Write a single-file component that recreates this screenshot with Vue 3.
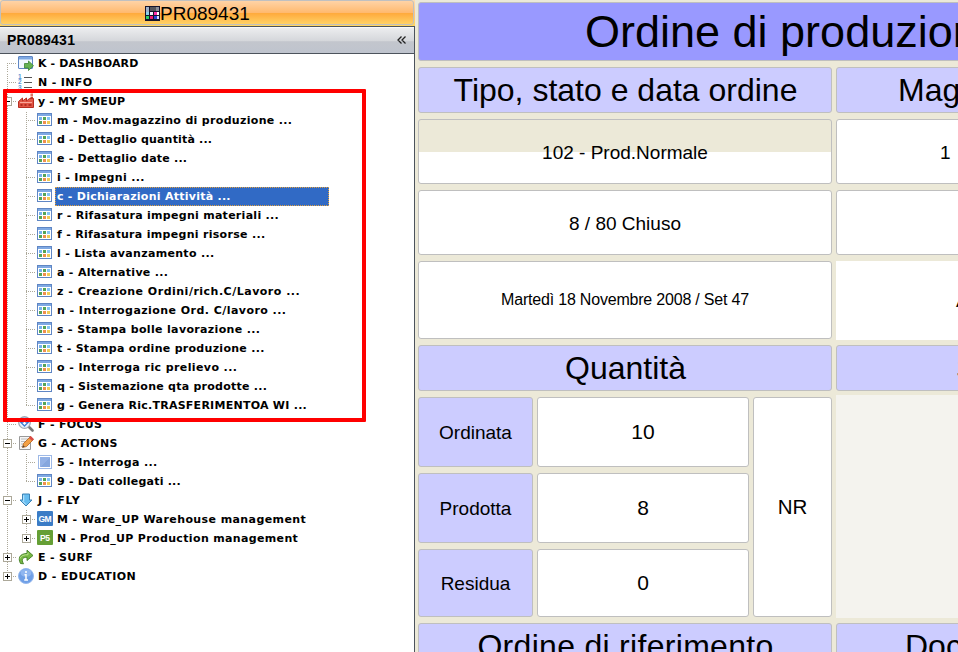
<script setup>
const rows = [
  { icon: 'dash', text: 'K - DASHBOARD', track: 0.1, first: true },
  { icon: 'list', text: 'N - INFO', track: 0.35 },
  { icon: 'factory', text: 'y - MY SMEUP', track: 0.15, box: '-' },
  { level: 1, icon: 'grid', text: 'm - Mov.magazzino di produzione ...', track: 0.32 },
  { level: 1, icon: 'grid', text: 'd - Dettaglio quantità ...', track: 0.18 },
  { level: 1, icon: 'grid', text: 'e - Dettaglio date ...', track: 0.22 },
  { level: 1, icon: 'grid', text: 'i - Impegni ...', track: 0.33 },
  { level: 1, icon: 'grid', text: 'c - Dichiarazioni Attività ...', track: 0.26, selected: true },
  { level: 1, icon: 'grid', text: 'r - Rifasatura impegni materiali ...', track: 0.28 },
  { level: 1, icon: 'grid', text: 'f - Rifasatura impegni risorse ...', track: 0.3 },
  { level: 1, icon: 'grid', text: 'l - Lista avanzamento ...', track: 0.32 },
  { level: 1, icon: 'grid', text: 'a - Alternative ...', track: 0.31 },
  { level: 1, icon: 'grid', text: 'z - Creazione Ordini/rich.C/Lavoro ...', track: 0.5 },
  { level: 1, icon: 'grid', text: 'n - Interrogazione Ord. C/lavoro ...', track: 0.45 },
  { level: 1, icon: 'grid', text: 's - Stampa bolle lavorazione ...', track: 0.34 },
  { level: 1, icon: 'grid', text: 't - Stampa ordine produzione ...', track: 0.29 },
  { level: 1, icon: 'grid', text: 'o - Interroga ric prelievo ...', track: 0.4 },
  { level: 1, icon: 'grid', text: 'q - Sistemazione qta prodotte ...', track: 0.25 },
  { level: 1, icon: 'grid', text: 'g - Genera Ric.TRASFERIMENTOA WI ...', track: 0.26, last: true },
  { icon: 'focus', text: 'F - FOCUS', track: 0.3 },
  { icon: 'edit', text: 'G - ACTIONS', track: 0.36, box: '-' },
  { level: 1, icon: 'square', text: '5 - Interroga ...', track: 0.35 },
  { level: 1, icon: 'grid', text: '9 - Dati collegati ...', track: 0.22, last: true },
  { icon: 'down', text: 'J - FLY', track: 0.75, box: '-' },
  { level: 1, icon: 'badge', badge: 'GM', text: 'M - Ware_UP Warehouse management', track: 0.41, box: '+' },
  { level: 1, icon: 'badge', badge: 'P5', text: 'N - Prod_UP Production management', track: 0.35, box: '+', last: true },
  { icon: 'surf', text: 'E - SURF', track: 0.3, box: '+' },
  { icon: 'info', text: 'D - EDUCATION', track: 0.4, box: '+', last: true },
]
</script>

<template>
  <div class="screen">
    <aside class="side">
      <div class="title-wrap">
        <div class="title">
          <svg width="15" height="15" viewBox="0 0 15 15" shape-rendering="crispEdges">
            <rect width="15" height="15" fill="#15152d" />
            <rect x="1" y="1" width="3" height="5" fill="#9fb0c8" />
            <rect x="5" y="1" width="6" height="4" fill="#55565c" />
            <rect x="11" y="1" width="3" height="4" fill="#8c8f99" />
            <rect x="1" y="6" width="3" height="3" fill="#8fd0e8" />
            <rect x="5" y="6" width="3" height="3" fill="#f2f2fa" />
            <rect x="9" y="6" width="3" height="3" fill="#ff2fa8" />
            <rect x="12" y="6" width="2" height="3" fill="#fff" />
            <rect x="1" y="10" width="3" height="3" fill="#2fcf62" />
            <rect x="5" y="10" width="3" height="3" fill="#f01d75" />
            <rect x="9" y="10" width="3" height="3" fill="#2846d8" />
            <rect x="12" y="10" width="2" height="3" fill="#d8dcff" />
          </svg>
          <span>PR089431</span>
        </div>
      </div>
      <div class="subtitle">
        <span>PR089431</span>
        <svg width="10" height="8" viewBox="0 0 10 8" fill="none" stroke="#222" stroke-width="1.3">
          <path d="M4.500 .5L1 4l3.500 3.500M8.500 .5L5 4l3.500 3.500" />
        </svg>
      </div>
      <div class="tree">
        <div v-for="row in rows" :key="row.text" class="row">
          <span v-if="row.level" class="cell trunk"></span>
          <span class="cell branch trunk" :class="{ first: row.first, last: row.last }">
            <svg v-if="row.box" class="box" width="9" height="9" viewBox="0 0 9 9" shape-rendering="crispEdges">
              <rect x=".5" y=".5" width="8" height="8" fill="#fff" stroke="#aca899" />
              <path :d="row.box === '+' ? 'M2 4.500h5M4.500 2v5' : 'M2 4.500h5'" stroke="#000" />
            </svg>
          </span>
          <svg class="icon" width="16" height="16" viewBox="0 0 16 16">
            <g v-if="row.icon === 'grid'" shape-rendering="crispEdges">
              <rect x=".5" y="1.500" width="14" height="12" fill="#fff" stroke="#5f86c4" />
              <rect x="1" y="2" width="13" height="2" fill="#7fa9e3" />
              <rect x="2" y="5" width="3" height="3" fill="#78b2ee" />
              <rect x="6" y="5" width="3" height="3" fill="#55a457" />
              <rect x="10" y="5" width="3" height="3" fill="#84c5f5" />
              <rect x="2" y="9" width="3" height="3" fill="#55a457" />
              <rect x="6" y="9" width="3" height="3" fill="#f0904d" />
              <rect x="10" y="9" width="3" height="3" fill="#f0cc55" />
            </g>
            <g v-else-if="row.icon === 'dash'">
              <rect x=".5" y="1.500" width="14" height="12" rx=".5" fill="#f1f7ff" stroke="#5f86c4" />
              <rect x="1" y="2" width="13" height="2.500" fill="#7fa9e3" />
              <path d="M6.500 8.500h4V6l5 4.700-5 4.800V13h-4z" fill="#66b253" stroke="#3b8333" stroke-width=".8" />
            </g>
            <g v-else-if="row.icon === 'list'">
              <path d="M6 3.500h8M6 8.500h8M6 13.500h8" stroke="#555" shape-rendering="crispEdges" />
              <g fill="#5b97d6" font-family="Liberation Sans" font-size="6.500">
                <text x="0" y="5">1</text><text x="0" y="10.300">2</text><text x="0" y="15.600">3</text>
              </g>
            </g>
            <g v-else-if="row.icon === 'factory'">
              <path d="M12.500 0h2.500v7h-2.500z" fill="#f2b0a4" />
              <path d="M12.500 2h2.500M12.500 4.500h2.500" stroke="#c33b2c" />
              <path d="M.5 14.500V8.500l4-3.500v3l4-3v3l3-2.500h4v9z" fill="#e25645" stroke="#b72e22" />
              <path d="M2 9.500h12" stroke="#f9a79a" />
              <path d="M2.500 12h2M6.500 12h2M10.500 12h3" stroke="#a52117" stroke-width="1.500" />
            </g>
            <g v-else-if="row.icon === 'focus'">
              <path d="M10.500 10.500l4 4" stroke="#777" stroke-width="2.600" stroke-linecap="round" />
              <circle cx="6.500" cy="6.500" r="5.800" fill="#e9f2fc" stroke="#a3a9b2" stroke-width="1.300" />
              <path d="M5 2.500h3v3.500h2.500l-4 4-4-4H5z" fill="#fff" stroke="#3f79cf" stroke-width="1.300" />
            </g>
            <g v-else-if="row.icon === 'edit'">
              <path d="M1.500 1.500h11v13h-11z" fill="#f5f5f5" stroke="#999" />
              <path d="M3 4h7M3 6.500h5M3 9h3M3 11.500h3" stroke="#bbb" />
              <path d="M4.500 12.500l1-4 7-7 3 3-7 7z" fill="#f3a044" stroke="#b3621c" stroke-width=".8" />
              <path d="M11 3l1.800-2 3 3L14 6z" fill="#db4a45" />
              <path d="M4.500 12.500l.6-2.300 1.700 1.600z" fill="#444" />
            </g>
            <g v-else-if="row.icon === 'square'" shape-rendering="crispEdges">
              <rect x="1.500" y="1.500" width="13" height="13" fill="#fff" stroke="#9eb9e6" />
              <rect x="3" y="3" width="10" height="10" fill="#86a7de" />
              <path d="M3 13V3h10z" fill="#94b2e6" />
            </g>
            <g v-else-if="row.icon === 'down'">
              <path d="M4.500 2h7v6h2.500l-6 6-6-6h2.500z" fill="#67bdf0" stroke="#3d83b5" stroke-linejoin="round" />
              <path d="M5.700 3.200v6M4.500 9l3.500 3.600" stroke="#c4eaff" fill="none" />
            </g>
            <g v-else-if="row.icon === 'badge'">
              <rect x="0" y="0" width="16" height="15" rx="1" :fill="row.badge === 'GM' ? '#3b7cc6' : '#659f35'" />
              <text x="8" y="10.800" text-anchor="middle" fill="#fff" font-family="Liberation Sans" font-weight="bold" font-size="8.500" :textLength="row.badge === 'GM' ? 13 : 10">{{ row.badge }}</text>
            </g>
            <g v-else-if="row.icon === 'surf'">
              <path d="M2.500 14.500C-.5 9 2 4.500 9 4.500V1.200l6 5.300-6 5V8.300C5 8.300 2.800 10 5.500 14.800z" fill="#76b843" stroke="#3f7d22" stroke-width=".9" stroke-linejoin="round" />
              <path d="M2 9.500C3 6.500 6 5.700 10 5.700V3.500" stroke="#b7e08b" fill="none" />
            </g>
            <g v-else>
              <circle cx="8" cy="8" r="7.500" fill="#6f9fe6" stroke="#94b8ee" />
              <ellipse cx="8" cy="5" rx="5.500" ry="3.800" fill="#8fb6f0" />
              <path d="M8 3v2M6.500 6.700H8v5M6.200 12h3.800" stroke="#fff" stroke-width="1.500" fill="none" />
            </g>
          </svg>
          <span class="label" :class="{ selected: row.selected }" :style="{ letterSpacing: row.track + 'px' }">{{ row.text }}</span>
        </div>
      </div>
    </aside>

    <main class="sheet">
      <div class="card head">Ordine di produzione</div>
      <div class="card sec">Tipo, stato e data ordine</div>
      <div class="card sec cut mag">Mag</div>
      <div class="card half">102 - Prod.Normale</div>
      <div class="card cut one">1</div>
      <div class="card">8 / 80 Chiuso</div>
      <div class="card cut"></div>
      <div class="card date">Martedì 18 Novembre 2008 / Set 47</div>
      <div class="plain edge-a">A</div>
      <div class="card sec qty-title">Quantità</div>
      <div class="card sec cut edge-s">S</div>
      <div class="qty">
        <div class="card tag">Ordinata</div>
        <div class="card num">10</div>
        <div class="card num unit">NR</div>
        <div class="card tag">Prodotta</div>
        <div class="card num">8</div>
        <div class="card tag">Residua</div>
        <div class="card num">0</div>
      </div>
      <div class="plain chart"></div>
      <div class="card sec wide">Ordine di riferimento</div>
      <div class="card sec cut doc">Doc</div>
    </main>

    <div class="marker"></div>
  </div>
</template>

<style>
body { overflow: hidden; }
</style>

<style scoped>
.screen {
  position: relative;
  display: flex;
  width: 958px;
  height: 652px;
  overflow: hidden;
  background: #ece9d8;
  color: #000;
  font-family: "Liberation Sans", Arial, sans-serif;
}
.side {
  box-sizing: border-box;
  flex: none;
  width: 415px;
  display: flex;
  flex-direction: column;
}
.title-wrap { height: 26px; background: linear-gradient(#ffdcb0, #ffc67b 50%, #ffd660); }
.title {
  box-sizing: border-box;
  width: 414px;
  height: 25px;
  display: flex;
  align-items: center;
  padding: 1px 0 0 144px;
  border: 1px solid #c0c0c0;
  border-radius: 3px;
  background: linear-gradient(#ffd3a6 0, #ffba70 50%, #ffa83a 51%, #ffd166 100%);
  font-size: 19px;
}
.title span { padding-top: 2px; }
.subtitle {
  box-sizing: border-box;
  height: 28px;
  display: flex;
  align-items: center;
  justify-content: space-between;
  padding: 0 7px;
  border: solid #4c535c;
  border-width: 1px 1px 1px 0;
  background: linear-gradient(#fff 0, #ebecee 6%, #d4d6da 55%, #c3c6cd 56%, #bfc4ce 100%);
  font-size: 14px;
  font-weight: bold;
  letter-spacing: .25px;
}
.tree {
  flex: 1;
  border-right: 1px solid #4c535c;
  background: #fff;
  font: bold 11px/19px "DejaVu Sans", Verdana, sans-serif;
}
.row { display: flex; height: 19px; }
.cell {
  flex: none;
  width: 19px;
  height: 19px;
  background-repeat: no-repeat;
}
.trunk {
  background-image: repeating-linear-gradient(#aca899 0 1px, transparent 1px 2px);
  background-size: 1px 19px;
  background-position: 7px 0;
}
.branch {
  width: 18px;
  padding: 5px 0 0 3px;
  box-sizing: border-box;
  line-height: 0;
  background-image: repeating-linear-gradient(#aca899 0 1px, transparent 1px 2px), repeating-linear-gradient(90deg, #aca899 0 1px, transparent 1px 2px);
  background-size: 1px 19px, 9px 1px;
  background-position: 7px 0, 7px 9px;
}
.row:nth-child(even) .trunk { background-position: 7px 1px, 7px 9px; }
.row .branch.first { background-position: 7px 9px, 7px 9px; }
.row .branch.last { background-size: 1px 10px, 9px 1px; }
.icon { flex: none; margin-top: 1px; }
.label {
  box-sizing: border-box;
  height: 19px;
  margin-left: 2px;
  padding-left: 2px;
  line-height: 19px;
  white-space: pre;
}
.selected {
  width: 274px;
  border: 1px dotted #e0a040;
  padding-left: 1px;
  line-height: 17px;
  background: #316ac5;
  color: #fff;
}
.sheet {
  display: grid;
  grid-template-columns: 414px 420px;
  grid-template-rows: 59px 46px 65px 65px 78px 46px 220px 46px;
  gap: 6px 4px;
  padding: 2px 0 0 3px;
}
.card {
  box-sizing: border-box;
  display: flex;
  align-items: center;
  justify-content: center;
  min-width: 0;
  padding-top: 2px;
  border: 1px solid #bfbfbf;
  border-radius: 3px;
  background: #fff;
  font-size: 19px;
  white-space: nowrap;
}
.head {
  grid-column: 1 / 3;
  justify-content: flex-start;
  padding-left: 166px;
  padding-top: 1px;
  background: #99f;
  font-size: 45px;
}
.sec { background: #ccf; font-size: 32px; padding-top: 1px; }
.sec:not(.cut) { padding-left: 1px; }
.qty-title { padding-top: 0; }
.wide { letter-spacing: .3px; }
.cut { justify-content: flex-start; }
.mag { padding-left: 61px; }
.one { padding-left: 103px; }
.half { background: linear-gradient(#ece9d8 0 32px, #fff 32px); }
.date { font-size: 16px; padding-top: 0; letter-spacing: -.2px; }
.plain { background: #fff; margin-bottom: -1px; }
.edge-a { padding: 29px 0 0 120px; font-size: 19px; }
.edge-s { padding-left: 119px; }
.doc { padding-left: 68px; }
.chart { margin-top: -2px; background: #f4f3ee; }
.qty {
  display: grid;
  grid-template-columns: 115px 212px 79px;
  grid-template-rows: 70px 70px 68px;
  gap: 6px 4px;
}
.tag { background: #ccf; }
.num { font-size: 21px; padding-top: 0; }
.unit { grid-column: 3; grid-row: 1 / 4; font-size: 20.5px; }
.marker {
  position: absolute;
  box-sizing: border-box;
  left: 3px;
  top: 89px;
  width: 363px;
  height: 333px;
  border: 4px solid #f00;
  border-radius: 1px;
}
</style>
